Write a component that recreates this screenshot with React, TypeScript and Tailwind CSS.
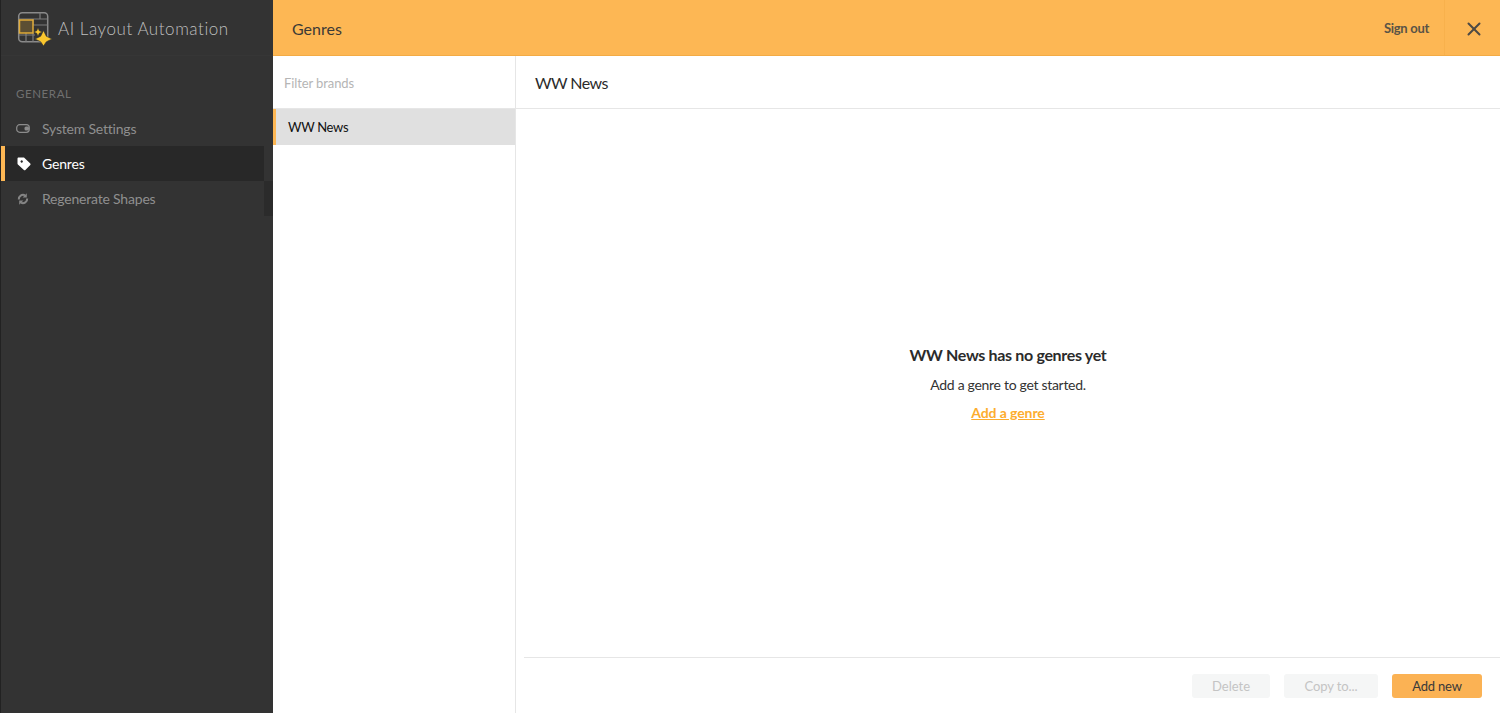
import React from 'react';
import { X } from 'lucide-react';

const Logo: React.FC = () => (
    <svg width="36" height="36" viewBox="0 0 36 36" fill="none" className="shrink-0">
        <rect x="1.700" y="2.700" width="29" height="29" rx="3.500" stroke="#8a8a8a" strokeWidth="1.500" />
        <path d="M1.700 9H30.700M16 9V15M23 2.700V9M16 15H30.700M1.700 25H18M9 23V31.700M16 23V31.700" stroke="#7d7d7d" strokeWidth="1.200" />
        <rect x="2.500" y="10" width="13.500" height="13" fill="#5c4f33" stroke="#e0ab38" strokeWidth="1.500" />
        <path d="M26.500 20.500L29.300 26.200L35 29L29.300 31.800L26.500 36L23.700 31.800L18 29L23.700 26.200Z" fill="#f9c62e" stroke="#333333" strokeWidth=".6" />
        <path d="M21 18L22.200 20.800L25 22L22.200 23.200L21 26L19.800 23.200L17 22L19.800 20.800Z" fill="#f9c62e" stroke="#333333" strokeWidth=".4" />
    </svg>
);

const ToggleIcon: React.FC = () => (
    <svg width="14" height="9" viewBox="0 0 14 9" fill="none">
        <rect x=".7" y=".7" width="12.600" height="7.600" rx="3" stroke="#8c8c8c" strokeWidth="1.200" />
        <rect x="8.500" y="2.500" width="4.500" height="4" rx="1.500" fill="#8c8c8c" />
    </svg>
);

const TagIcon: React.FC = () => (
    <svg width="14" height="14" viewBox="0 0 14 14" className="shrink-0">
        <path d="M.5 1.600C.5 1 1 .5 1.600.5H6.500c.4 0 .7.200 1 .4l5.800 5.700c.4.500.4 1.100 0 1.500l-4.900 4.900c-.4.400-1.100.400-1.500 0L.9 7.400c-.3-.2-.4-.600-.4-1V1.600Zm3 2.900a1.200 1.200 0 1 0 0-.01Z" fill="#ffffff" fillRule="evenodd" />
    </svg>
);

const RefreshIcon: React.FC = () => (
    <svg width="12" height="12" viewBox="0 0 12 12" fill="none">
        <path d="M1.800 6.500A4.300 4.300 0 0 1 8 2.300" stroke="#858585" strokeWidth="2" />
        <path d="M10.200 5.500A4.300 4.300 0 0 1 4 9.700" stroke="#858585" strokeWidth="2" />
        <path d="M9.800 .3V4.500H5.600Z M2.200 11.700V7.500H6.400Z" fill="#858585" />
    </svg>
);

const App: React.FC = () => {
    return (
        <div className="h-[713px] w-[1500px] overflow-hidden flex bg-white font-['Lato','Liberation_Sans',sans-serif]">
            {/* sidebar */}
            <aside className="w-[273px] shrink-0 bg-[#333333] border-l border-[#222222] flex flex-col">
                <div className="h-14 flex items-center pl-[16px] gap-[5px] border-b border-[#363636]">
                    <Logo />
                    <span className="text-[17px] font-light tracking-[0.55px] text-[#bfbfbf] relative top-[1px]">AI Layout Automation</span>
                </div>
                <div className="pt-[31px] pl-[15px] h-[55px] text-[11.500px] leading-[14px] tracking-[0.6px] text-[#707070]">GENERAL</div>
                <div className="flex items-center h-[35px] pl-[15px] gap-[12px] text-[14px] tracking-[-0.2px] text-[#8f8f8f]">
                    <span className="w-[14px] flex justify-center"><ToggleIcon /></span>
                    System Settings
                </div>
                <div className="flex items-center h-[35px] w-[263px] bg-[#282828] border-l-4 border-[#fdb754] pl-[12px] gap-[11px] text-[14px] tracking-[-0.16px] text-white">
                    <TagIcon />
                    <span>Genres</span>
                </div>
                <div className="flex h-[35px]">
                    <div className="flex items-center w-[263px] pl-[15px] gap-[12px] text-[14px] tracking-[-0.2px] text-[#8f8f8f]">
                        <span className="w-[14px] flex justify-center"><RefreshIcon /></span>
                        Regenerate Shapes
                    </div>
                    <div className="w-[9px] bg-[#2b2b2b]" />
                </div>
            </aside>

            <div className="flex-1 min-w-0 flex flex-col">
                {/* top bar */}
                <header className="h-14 shrink-0 bg-[#fdb754] border-b border-[#f3ab45] flex items-center pl-[19px]">
                    <span className="flex-1 text-[16px] text-[#3c3a36] relative top-[1px]">Genres</span>
                    <span className="text-[13px] tracking-[-0.3px] font-bold text-[#5a5346] pr-[15px] relative top-[1px]">Sign out</span>
                    <div className="h-full w-[56px] border-l border-[#f8b14c] flex items-center justify-center">
                        <X size={22} strokeWidth={2.200} className="text-[#4d4a45] relative top-[1px] left-[1px]" />
                    </div>
                </header>

                <div className="flex-1 min-h-0 flex">
                    {/* brand list */}
                    <div className="w-[243px] shrink-0 border-r border-[#e6e6e6] flex flex-col">
                        <div className="h-[53px] flex items-center pt-[3px] pl-[11px] text-[13px] tracking-[-0.1px] text-[#b5b5b5] border-b border-[#e6e6e6]">Filter brands</div>
                        <div className="h-[36px] bg-[#e0e0e0] border-l-[3px] border-[#fdb754] flex items-center pt-[1px] pl-[12px] text-[13px] tracking-[-0.3px] text-[#111111]">WW News</div>
                    </div>

                    {/* detail pane */}
                    <div className="flex-1 min-w-0 flex flex-col">
                        <div className="h-[53px] shrink-0 flex items-center pt-[1px] pl-[19px] text-[16px] tracking-[-0.55px] text-[#2b2b2b] border-b border-[#e6e6e6]">WW News</div>
                        <div className="flex-1 min-h-0 flex flex-col items-center pt-[234px] text-[#2b2b2b]">
                            <div className="text-[16px] leading-[22px] pt-[1px] tracking-[-0.33px] font-bold">WW News has no genres yet</div>
                            <div className="text-[14px] leading-[18px] mt-[10px] tracking-[-0.3px] text-[#333333]">Add a genre to get started.</div>
                            <a className="text-[14px] leading-[18px] mt-[10px] tracking-[-0.1px] font-bold underline text-[#fdad2e]">Add a genre</a>
                        </div>
                        <div className="h-[56px] shrink-0 ml-[8px] border-t border-[#e6e6e6] flex items-start justify-end gap-[14px] pt-[16px] pr-[18px] text-[13px]">
                            <button className="w-[78px] h-[24px] pt-[1px] rounded-[3px] bg-[#f5f6f6] text-[#c4c4c4]">Delete</button>
                            <button className="w-[94px] h-[24px] pt-[1px] rounded-[3px] bg-[#f5f6f6] text-[#c4c4c4] tracking-[-0.1px]">Copy to...</button>
                            <button className="w-[90px] h-[24px] pt-[1px] rounded-[3px] bg-[#fbb254] text-[#3a3a3a] tracking-[-0.2px]">Add new</button>
                        </div>
                    </div>
                </div>
            </div>
        </div>
    );
};

export default App;
